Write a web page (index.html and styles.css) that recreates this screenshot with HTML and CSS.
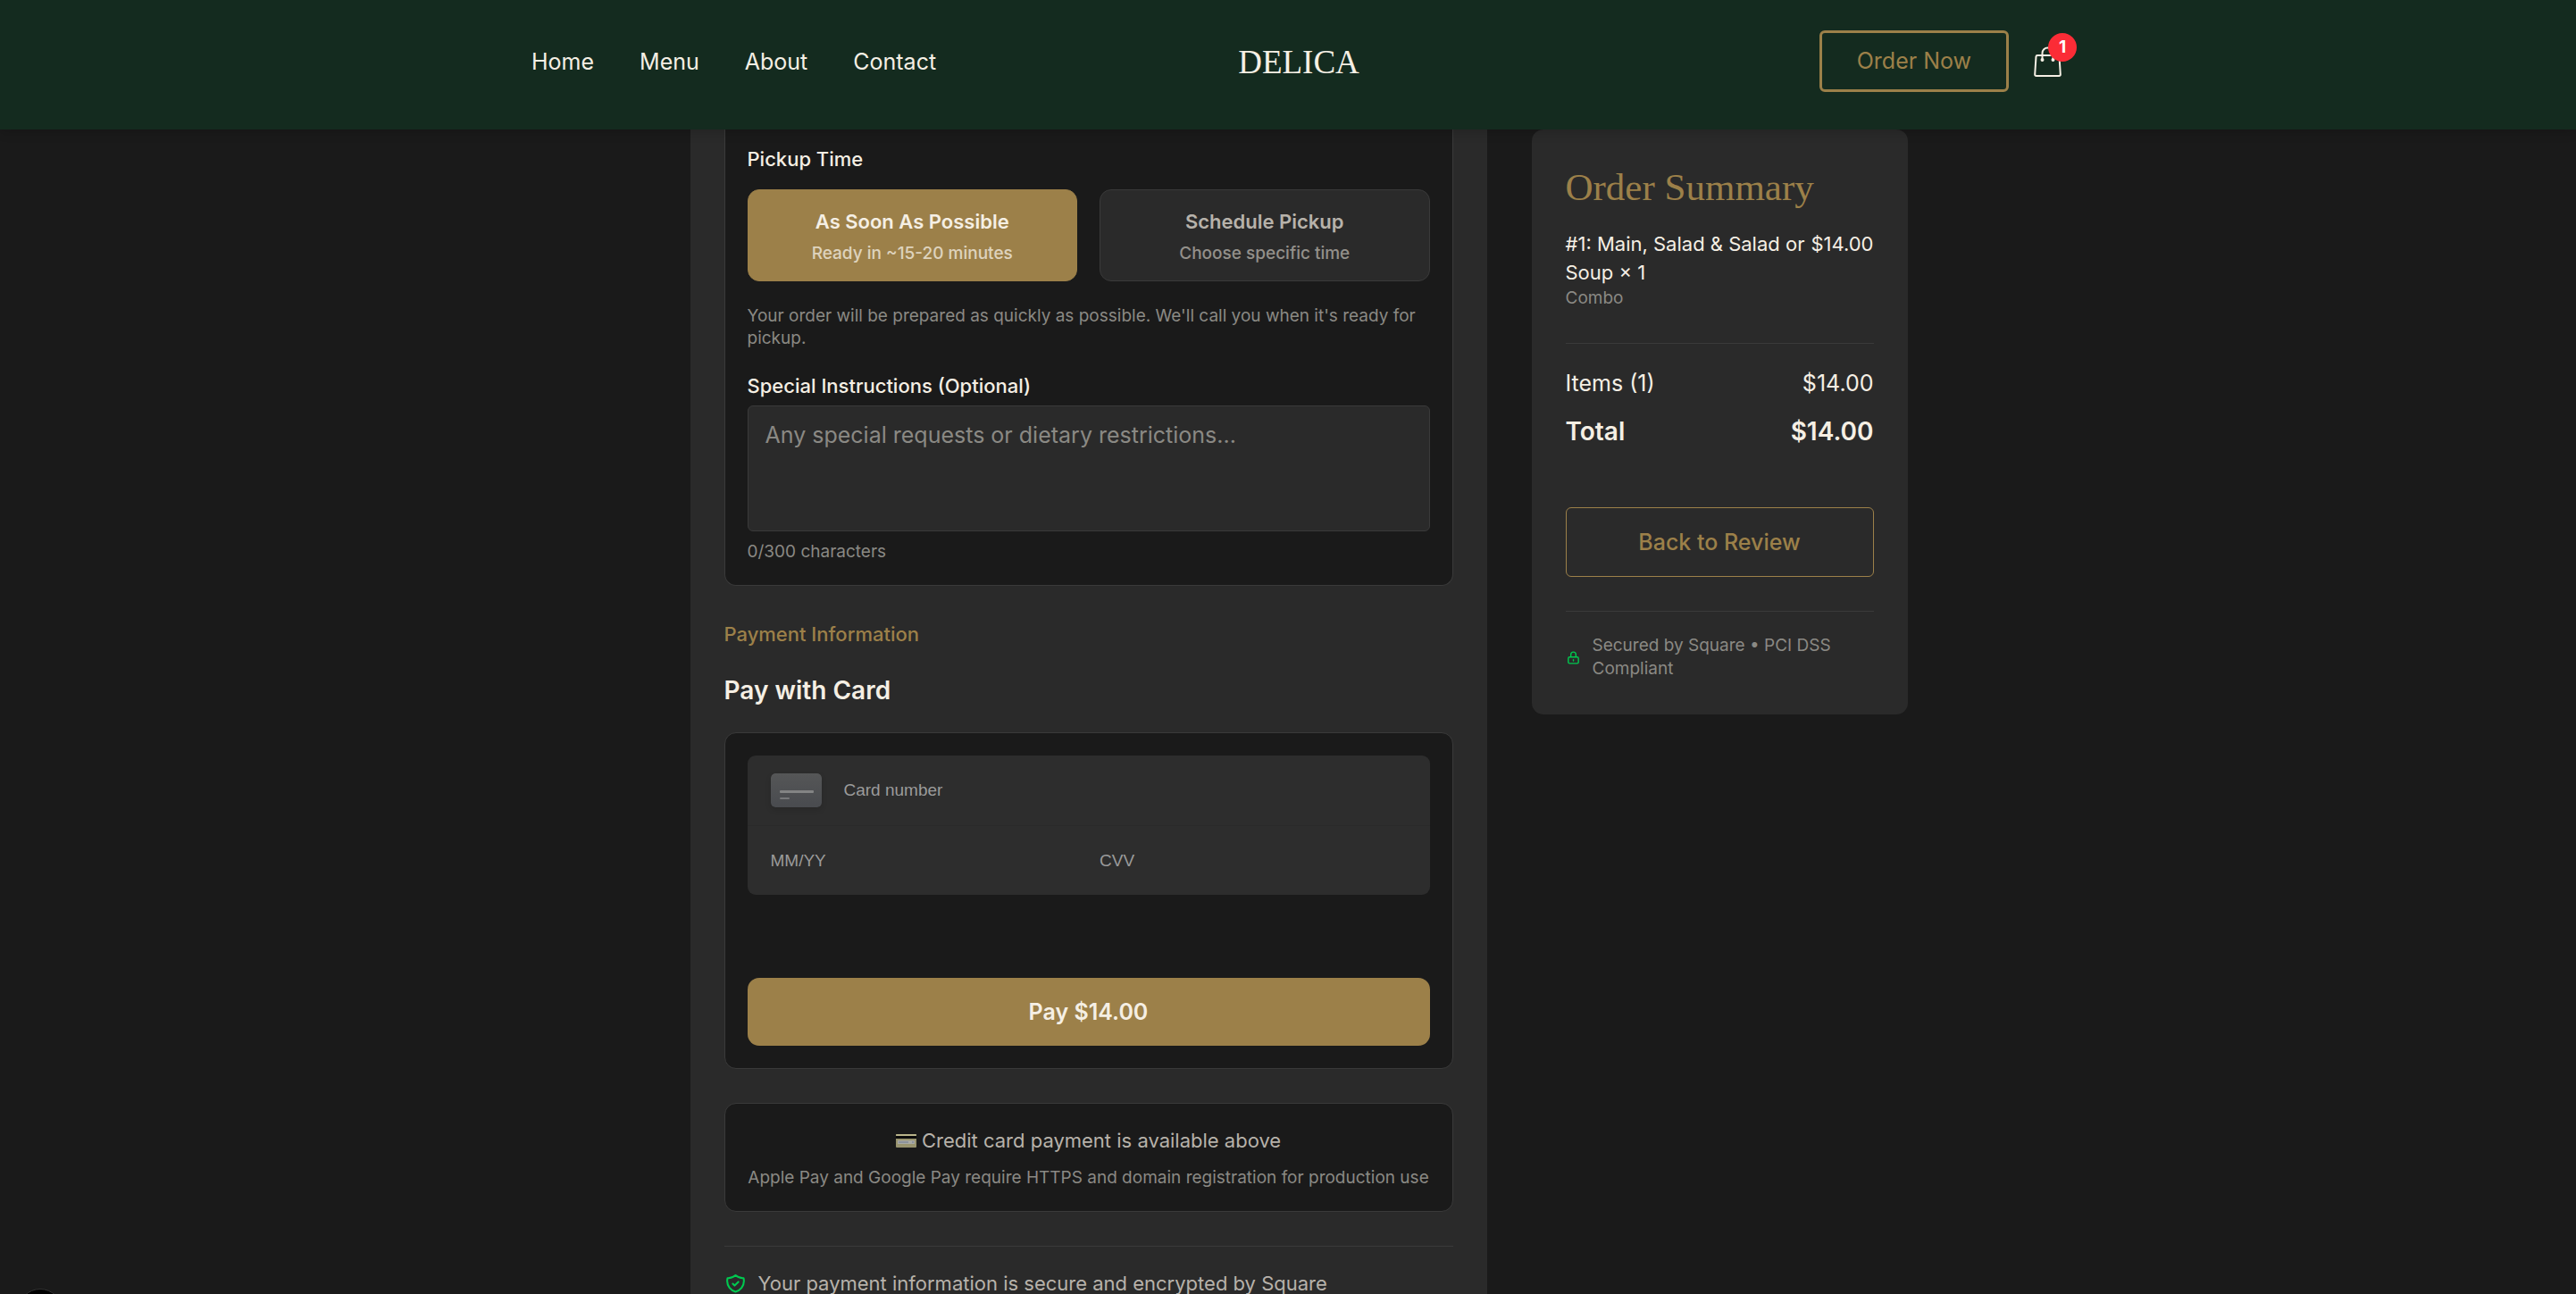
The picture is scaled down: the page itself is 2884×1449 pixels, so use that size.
FILE: index.html
```html
<!DOCTYPE html>
<html lang="en">
<head>
<meta charset="utf-8">
<title>Checkout – Delica</title>
<meta name="viewport" content="width=device-width, initial-scale=1">
<link rel="stylesheet" href="styles.css">
</head>
<body>
<header class="site-header">
  <div class="header-inner">
    <nav class="nav">
      <a href="#">Home</a>
      <a href="#">Menu</a>
      <a href="#">About</a>
      <a href="#">Contact</a>
    </nav>
    <a class="brand" href="#">DELICA</a>
    <div class="header-actions">
      <a class="order-now" href="#">Order Now</a>
      <button class="cart" type="button" aria-label="Cart, 1 item">
        <svg class="cart-icon" viewBox="0 0 32 36" aria-hidden="true"><path d="M4 11h23q1.400 0 1.500 1.400l1.300 19.800q.1 1.800-1.700 1.800H2.900q-1.800 0-1.700-1.800l1.300-19.800Q2.600 11 4 11zM9.500 16V8.500a6 6 0 0 1 12 0V16"/><circle cx="9.500" cy="16" r="1"/><circle cx="21.500" cy="16" r="1"/></svg>
        <span class="cart-count">1</span>
      </button>
    </div>
  </div>
</header>

<main class="checkout">
  <form class="panel">
    <section class="box pickup">
      <h4 class="label">Pickup Time</h4>
      <div class="pickup-options">
        <button class="option option-active" type="button"><span class="option-title">As Soon As Possible</span><span class="option-note">Ready in ~15-20 minutes</span></button>
        <button class="option" type="button"><span class="option-title">Schedule Pickup</span><span class="option-note">Choose specific time</span></button>
      </div>
      <p class="hint pickup-hint">Your order will be prepared as quickly as possible. We'll call you when it's ready for pickup.</p>
      <label class="label" for="notes">Special Instructions (Optional)</label>
      <textarea class="notes" id="notes" maxlength="300" placeholder="Any special requests or dietary restrictions..."></textarea>
      <p class="hint">0/300 characters</p>
    </section>

    <h3 class="section-title">Payment Information</h3>
    <h2 class="pay-title">Pay with Card</h2>

    <section class="box pay-box">
      <div class="card-fields">
        <div class="card-row">
          <svg class="card-icon" viewBox="0 0 57 38" aria-hidden="true">
            <defs><linearGradient id="card-fill" x1="0" y1="0" x2="0" y2="1"><stop offset="0" stop-color="#555657"/><stop offset="1" stop-color="#494b4f"/></linearGradient></defs>
            <rect width="57" height="38" rx="5" fill="url(#card-fill)"/>
            <rect x="10" y="19" width="38" height="3" rx="1" fill="#838484"/>
            <rect x="10" y="27" width="11" height="2" rx="1" fill="#77787a"/>
          </svg>
          <input class="card-input" type="text" placeholder="Card number" aria-label="Card number">
        </div>
        <div class="card-row card-row-split">
          <input class="card-input" type="text" placeholder="MM/YY" aria-label="Expiry date">
          <input class="card-input" type="text" placeholder="CVV" aria-label="CVV">
        </div>
      </div>
      <button class="pay-button" type="button">Pay $14.00</button>
    </section>

    <section class="box wallet-box">
      <p class="wallet-title"><svg class="credit-icon" viewBox="0 0 23 15" aria-hidden="true"><rect width="23" height="15" rx="1" fill="#99946f"/><rect width="23" height="2" rx="1" fill="#b9b48a"/><rect y="2" width="23" height="3" fill="#0c0c0b"/><rect x="2" y="7" width="19" height="4" fill="#a9aaa4"/><path d="M3 9h11M18 9h2" stroke="#6e7b92" stroke-width="1"/></svg> Credit card payment is available above</p>
      <p class="hint">Apple Pay and Google Pay require HTTPS and domain registration for production use</p>
    </section>

    <div class="secure-note">
      <svg class="shield-icon" viewBox="0 0 24 24" aria-hidden="true"><path d="M9 12l2 2 4-4m5.618-4.016A11.955 11.955 0 0112 2.944a11.955 11.955 0 01-8.618 3.040A12.020 12.020 0 003 9c0 5.591 3.824 10.290 9 11.622 5.176-1.332 9-6.030 9-11.622 0-1.042-.133-2.052-.382-3.016z"/></svg>
      <span>Your payment information is secure and encrypted by Square</span>
    </div>
  </form>

  <aside class="summary">
    <h2 class="summary-title">Order Summary</h2>
    <div class="item">
      <div>
        <p>#1: Main, Salad &amp; Salad or Soup × 1</p>
        <p class="item-kind">Combo</p>
      </div>
      <span>$14.00</span>
    </div>
    <dl class="totals">
      <div class="total-row"><dt>Items (1)</dt><dd>$14.00</dd></div>
      <div class="total-row total-final"><dt>Total</dt><dd>$14.00</dd></div>
    </dl>
    <button class="back-button" type="button">Back to Review</button>
    <div class="secured">
      <svg class="lock-icon" viewBox="0 0 24 24" aria-hidden="true"><path d="M12 15v2m-6 4h12a2 2 0 002-2v-6a2 2 0 00-2-2H6a2 2 0 00-2 2v6a2 2 0 002 2zm10-10V7a4 4 0 00-8 0v4h8z"/></svg>
      <span>Secured by Square • PCI DSS Compliant</span>
    </div>
  </aside>
</main>

<button class="dev-badge" type="button" aria-label="Developer tools"></button>
</body>
</html>
```
FILE: styles.css
```css
:root {
  --green: #142b1f;
  --bg: #1a1a1a;
  --surface: #2a2a2a;
  --line: #3a3a3a;
  --gold: #9c8049;
  --cream: #f5efe4;
  --soft: #b7b2aa;
  --muted: #8a8984;
}

* { box-sizing: border-box; }

body, h2, h3, h4, p, dl, dd { margin: 0; }

body {
  display: flex;
  flex-direction: column;
  height: 100vh;
  overflow: hidden;
  background: var(--bg);
  color: var(--cream);
  font: 400 22px/32px Inter, "Liberation Sans", sans-serif;
}

button, input, textarea { font: inherit; color: inherit; }
button { cursor: pointer; }
a { color: inherit; text-decoration: none; }

/* Header */
.site-header {
  position: relative;
  z-index: 1;
  flex: none;
  padding: 34px 0 42px 24px;
  background: var(--green);
  box-shadow: 0 2px 12px rgba(0, 0, 0, .2);
}

.header-inner {
  display: grid;
  grid-template-columns: 1fr auto 1fr;
  align-items: center;
  max-width: 1718px;
  margin: 0 auto;
}

.nav { display: flex; gap: 51px; font-size: 25px; }

.brand { padding-top: 3px; font: 400 37px/48px "Liberation Serif", serif; }

.header-actions {
  display: flex;
  justify-content: flex-end;
  align-items: center;
  gap: 28px;
}

.order-now {
  padding: 16px 39px;
  border: 3px solid var(--gold);
  border-radius: 6px;
  color: var(--gold);
  font-size: 25px;
  line-height: 31px;
}

.cart {
  position: relative;
  width: 36px;
  height: 36px;
  padding: 0;
  border: 0;
  background: none;
}

.cart-icon {
  display: block;
  width: 32px;
  height: 36px;
  fill: none;
  stroke: var(--cream);
  stroke-width: 2;
}

.cart-count {
  position: absolute;
  top: -14px;
  right: -12px;
  width: 32px;
  height: 32px;
  border-radius: 50%;
  background: #fb2c36;
  color: #fff;
  font-size: 19px;
  font-weight: 700;
  line-height: 32px;
}

/* Layout */
.checkout {
  flex: 1;
  display: grid;
  grid-template-columns: 892fr 421fr;
  align-items: start;
  gap: 50px;
  width: 100%;
  max-width: 1387px;
  margin: 0 auto;
  padding-left: 24px;
}

.panel {
  padding: 0 38px;
  background: var(--surface);
}

.box {
  padding: 25px;
  border: 1px solid var(--line);
  border-radius: 13px;
  background: var(--bg);
}

.label { display: block; font-size: 22px; font-weight: 500; line-height: 32px; }

.hint { color: var(--muted); font-size: 19px; line-height: 25px; }

/* Pickup */
.pickup {
  padding-top: 17px;
  border-top: 0;
  border-radius: 0 0 13px 13px;
}

.pickup-options {
  display: grid;
  grid-template-columns: 1fr 1fr;
  gap: 25px;
  margin-top: 18px;
}

.option {
  display: flex;
  flex-direction: column;
  align-items: center;
  gap: 7px;
  padding: 19px 19px 18px;
  border: 1px solid var(--line);
  border-radius: 13px;
  background: var(--surface);
  color: var(--soft);
}

.option-active { border-color: var(--gold); background: var(--gold); color: var(--cream); }
.option-title { font-weight: 600; line-height: 32px; }
.option-note { font-size: 19px; font-weight: 500; line-height: 25px; opacity: .75; }

.pickup-hint { margin: 26px 0 25px; }

.notes {
  display: block;
  width: 100%;
  height: 141px;
  margin: 6px 0 10px;
  padding: 13px 19px;
  border: 1px solid var(--line);
  border-radius: 6px;
  background: var(--surface);
  font-size: 25px;
  line-height: 38px;
  resize: none;
}

.notes::placeholder { color: var(--muted); opacity: 1; }

/* Payment */
.section-title {
  margin-top: 38px;
  color: var(--gold);
  font-size: 22px;
  font-weight: 500;
  line-height: 32px;
}

.pay-title {
  margin: 25px 0;
  font-size: 28px;
  font-weight: 600;
  line-height: 44px;
}

.card-fields {
  margin-bottom: 93px;
  border-radius: 9px;
  background: #2d2d2d;
}

.card-row {
  display: flex;
  align-items: center;
  gap: 25px;
  height: 78px;
  padding: 0 26px;
}

.card-row-split { border-top: 1px solid var(--surface); }

.card-icon { flex: none; width: 57px; height: 38px; border-radius: 5px; box-shadow: 0 3px 6px rgba(0, 0, 0, .12); }

.card-input {
  flex: 1;
  min-width: 0;
  padding: 0;
  border: 0;
  background: none;
  font: 400 19px/32px "Liberation Sans", Arial, sans-serif;
}

.card-input::placeholder { color: #9b9b9b; opacity: 1; }

.pay-button {
  display: block;
  width: 100%;
  padding: 19px;
  border: 0;
  border-radius: 13px;
  background: var(--gold);
  font-size: 25px;
  font-weight: 600;
  line-height: 38px;
}

.wallet-box { margin-top: 38px; text-align: center; white-space: nowrap; }
.wallet-title { margin-bottom: 13px; color: var(--soft); }
.credit-icon { width: 23px; height: 15px; }

.secure-note {
  display: flex;
  align-items: center;
  gap: 13px;
  margin-top: 38px;
  padding: 25px 0;
  border-top: 1px solid var(--line);
  color: var(--soft);
}

.shield-icon, .lock-icon {
  flex: none;
  fill: none;
  stroke: #00c950;
  stroke-width: 2;
  stroke-linecap: round;
  stroke-linejoin: round;
}

.shield-icon { width: 25px; height: 25px; }
.lock-icon { width: 17px; height: 17px; }

/* Summary */
.summary {
  padding: 38px;
  border-radius: 13px;
  background: var(--surface);
}

.summary-title {
  margin-bottom: 20px;
  color: var(--gold);
  font: 400 43px/54px "Liberation Serif", serif;
}

.item {
  display: flex;
  justify-content: space-between;
  padding-bottom: 38px;
  border-bottom: 1px solid var(--line);
}

.item-kind { color: var(--muted); font-size: 19px; line-height: 25px; }

.totals { display: grid; gap: 13px; padding: 25px 0; }

.total-row {
  display: flex;
  justify-content: space-between;
  font-size: 25px;
  line-height: 38px;
}

.total-final { font-size: 28px; font-weight: 600; line-height: 44px; }

.back-button {
  display: block;
  width: 100%;
  margin: 38px 0;
  padding: 19px;
  border: 1px solid var(--gold);
  border-radius: 6px;
  background: none;
  color: var(--gold);
  font-size: 25px;
  font-weight: 500;
  line-height: 38px;
}

.secured {
  display: flex;
  align-items: center;
  gap: 13px;
  padding-top: 25px;
  border-top: 1px solid var(--line);
  color: var(--muted);
  font-size: 19px;
  line-height: 26px;
}

/* Floating badge, mostly below the window's lower edge */
.dev-badge {
  position: fixed;
  left: 20px;
  bottom: -44px;
  width: 50px;
  height: 50px;
  border: 1px solid #333;
  border-radius: 50%;
  background: #000;
}
```
